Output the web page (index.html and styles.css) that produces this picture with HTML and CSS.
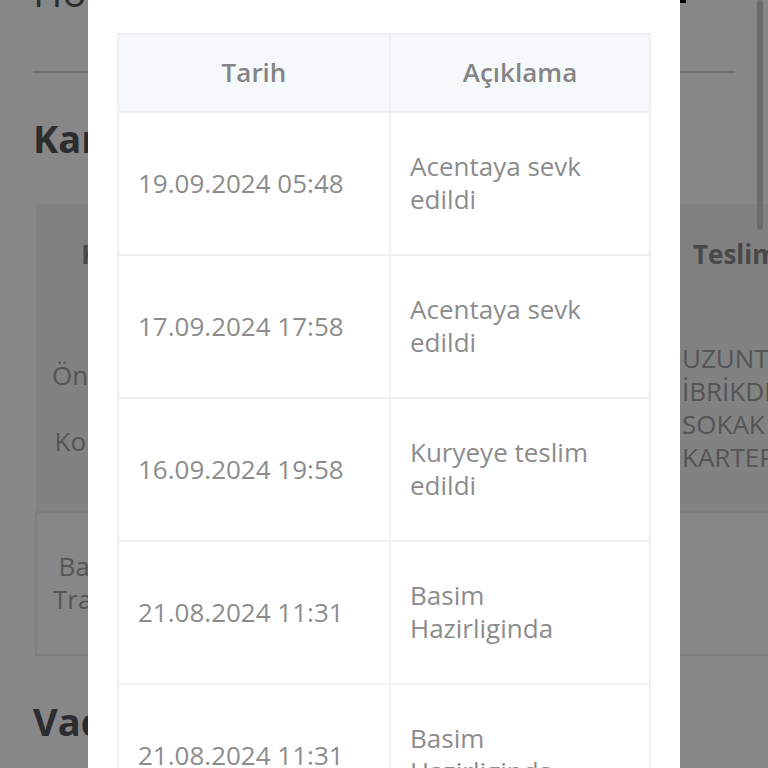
FILE: index.html
```html
<!DOCTYPE html>
<html lang="tr">

<head>
    <meta charset="UTF-8">
    <meta name="viewport" content="width=device-width, initial-scale=1.0">
    <title>Kargo Takip</title>
    <link rel="stylesheet" href="styles.css">
</head>

<body>
    <div class="page">
        <div class="page-head">
            <h1 class="page-title">Hoş Geldiniz</h1>
            <span class="head-icon"></span>
        </div>
        <hr class="divider">

        <h2 class="section-title">Kargo Bilgileri</h2>
        <div class="info-wrap">
            <table class="info-table">
                <thead>
                    <tr>
                        <th class="c-center">Kargo No</th>
                        <th class="c-center">Gönderi No</th>
                        <th class="c-center">Durum</th>
                        <th class="c-addr">Teslim Adresi</th>
                    </tr>
                </thead>
                <tbody>
                    <tr class="row-shade">
                        <td class="c-center">Öncelikli Kargo<br>&nbsp;<br>Kolay Adresim</td>
                        <td class="c-center">1234567890</td>
                        <td class="c-center">Yolda</td>
                        <td class="c-addr">UZUNTARLA MAH.<br>İBRİKDERE CAD.<br>SOKAK NO:5<br>KARTEPE/KOCAELİ</td>
                    </tr>
                    <tr class="row-box">
                        <td class="c-center">Banka Hesabı<br>Transfer Ücreti</td>
                        <td class="c-center">-</td>
                        <td class="c-center">-</td>
                        <td class="c-addr"></td>
                    </tr>
                </tbody>
            </table>
        </div>

        <h2 class="section-title">Vade Bilgileri</h2>
    </div>

    <div class="overlay">
        <div class="modal">
            <table class="track-table">
                <thead>
                    <tr>
                        <th class="col-date">Tarih</th>
                        <th>Açıklama</th>
                    </tr>
                </thead>
                <tbody>
                    <tr>
                        <td>19.09.2024 05:48</td>
                        <td class="desc">Acentaya sevk edildi</td>
                    </tr>
                    <tr>
                        <td>17.09.2024 17:58</td>
                        <td class="desc">Acentaya sevk edildi</td>
                    </tr>
                    <tr>
                        <td>16.09.2024 19:58</td>
                        <td class="desc">Kuryeye teslim edildi</td>
                    </tr>
                    <tr>
                        <td>21.08.2024 11:31</td>
                        <td class="desc">Basim Hazirliginda</td>
                    </tr>
                    <tr>
                        <td>21.08.2024 11:31</td>
                        <td class="desc">Basim Hazirliginda</td>
                    </tr>
                </tbody>
            </table>
        </div>
        <div class="scroll-thumb"></div>
    </div>
</body>

</html>
```

FILE: styles.css
```css
html,
body {
    margin: 0;
    height: 100%;
    overflow: hidden;
    background-color: #fff;
    font-family: "Open Sans", "Noto Sans", sans-serif;
}

/* page behind the modal */
.page {
    padding: 0 33px;
}

.page-head {
    display: flex;
    justify-content: space-between;
    align-items: flex-end;
    margin-top: -32px;
}

.page-title {
    margin: 0;
    font-size: 40px;
    line-height: 48px;
    font-weight: 400;
    color: #555;
}

.head-icon {
    width: 6px;
    height: 20px;
    margin-right: 49px;
    margin-bottom: 13px;
    background-color: #000;
}

.divider {
    margin: 55px 0 0;
    border: none;
    border-top: 2px solid #d0d0d0;
}

.section-title {
    margin: 42px 0 0;
    font-size: 38px;
    line-height: 46px;
    font-weight: 700;
    color: #525458;
}

.info-wrap {
    margin: 43px 0 0 2px;
}

.info-table {
    width: 930px;
    border-collapse: collapse;
    table-layout: fixed;
    font-size: 26px;
    line-height: 33px;
    color: #a0a0a0;
}

.info-table th {
    padding: 34px 16px;
    background-color: #f1f2f3;
    color: #888;
    font-weight: 700;
    white-space: nowrap;
    overflow: hidden;
}

.info-table td {
    padding: 37px 16px;
    white-space: nowrap;
}

.info-table .c-center {
    width: 178px;
    text-align: center;
}

.info-table .c-addr {
    width: 268px;
    text-align: left;
}

.info-table th.c-addr {
    padding-left: 27px;
}

.info-table .row-shade td {
    background-color: #f4f5f6;
}

.info-table .row-box td {
    padding: 37px 16px 38px;
    border: 2px solid #ececec;
}

/* modal */
.overlay {
    position: fixed;
    inset: 0;
    background-color: rgba(0, 0, 0, 0.47);
    display: flex;
    justify-content: center;
    align-items: flex-start;
}

.modal {
    width: 534px;
    padding: 33px 29px 0;
    background-color: #fff;
    min-height: 100%;
}

.track-table {
    width: 100%;
    border-collapse: collapse;
    table-layout: fixed;
    border: 2px solid #eef1f3;
    font-size: 26px;
    line-height: 33px;
}

.track-table th {
    padding: 21px 18px 22px;
    background-color: #f6f9fa;
    border: 2px solid #eef1f3;
    color: #858585;
    font-weight: 600;
    text-align: center;
}

.track-table .col-date {
    width: 234px;
}

.track-table td {
    padding: 37px 18px 38px 19px;
    border: 2px solid #f0f0f0;
    color: #8c8c8c;
    text-align: left;
    vertical-align: middle;
}

.track-table td.desc {
    padding-right: 32px;
}

.scroll-thumb {
    position: absolute;
    top: 0;
    right: 5px;
    width: 6px;
    height: 230px;
    border-radius: 3px;
    background-color: #6b6b6b;
}
```
